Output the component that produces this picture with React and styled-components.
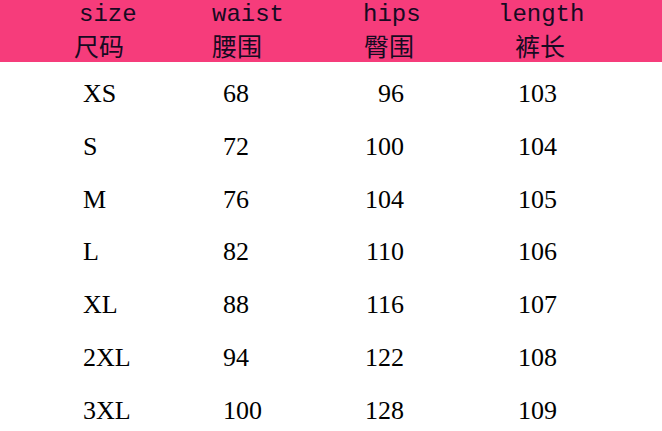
import React from 'react'
import styled, { createGlobalStyle } from 'styled-components'

const GlobalStyle = createGlobalStyle`
  html, body {
    margin: 0;
    padding: 0;
    background: #fff;
  }
`

const Sheet = styled.div`
  width: 662px;
  height: 431px;
  overflow: hidden;
  background: #fff;
`

const Header = styled.div`
  height: 62px;
  background: #f63c7b;
  display: flex;
  padding-left: 79px;
  box-sizing: border-box;
  color: #160a22;
`

const HeadCell = styled.div`
  width: ${p => p.$w}px;
  display: flex;
  flex-direction: column;
`

const En = styled.span`
  font-family: "Liberation Mono", monospace;
  font-size: 24px;
  line-height: 30px;
  white-space: nowrap;
`

const Zh = styled.span`
  font-family: "Noto Sans CJK SC", sans-serif;
  font-size: 25px;
  line-height: 30px;
  margin-left: ${p => p.$shift || 0}px;
  white-space: nowrap;
`

const Body = styled.div`
  padding-top: 6px;
`

const Row = styled.div`
  display: flex;
  height: 52.8px;
  align-items: center;
  padding-left: 83px;
  font-family: "Liberation Serif", serif;
  font-size: 26px;
  color: #000;
`

const Cell = styled.div`
  width: ${p => (p.$w ? `${p.$w}px` : 'auto')};
  text-align: ${p => (p.$right ? 'right' : 'left')};
  margin-left: ${p => p.$indent || 0}px;
  line-height: 52.8px;
`

const heads = [
  { en: 'size', zh: '尺码', w: 133, shift: -5 },
  { en: 'waist', zh: '腰围', w: 151, shift: 0 },
  { en: 'hips', zh: '臀围', w: 135, shift: 1 },
  { en: 'length', zh: '裤长', w: 120, shift: 17 },
]

const rows = [
  ['XS', 68, 96, 103],
  ['S', 72, 100, 104],
  ['M', 76, 104, 105],
  ['L', 82, 110, 106],
  ['XL', 88, 116, 107],
  ['2XL', 94, 122, 108],
  ['3XL', 100, 128, 109],
]

export default function App() {
  return (
    <Sheet>
      <GlobalStyle />
      <Header>
        {heads.map(h => (
          <HeadCell key={h.en} $w={h.w}>
            <En>{h.en}</En>
            <Zh $shift={h.shift}>{h.zh}</Zh>
          </HeadCell>
        ))}
      </Header>
      <Body>
        {rows.map(([size, waist, hips, len]) => (
          <Row key={size}>
            <Cell $w={140}>{size}</Cell>
            <Cell $w={141}>{waist}</Cell>
            <Cell $w={40} $right>{hips}</Cell>
            <Cell $indent={114}>{len}</Cell>
          </Row>
        ))}
      </Body>
    </Sheet>
  )
}
